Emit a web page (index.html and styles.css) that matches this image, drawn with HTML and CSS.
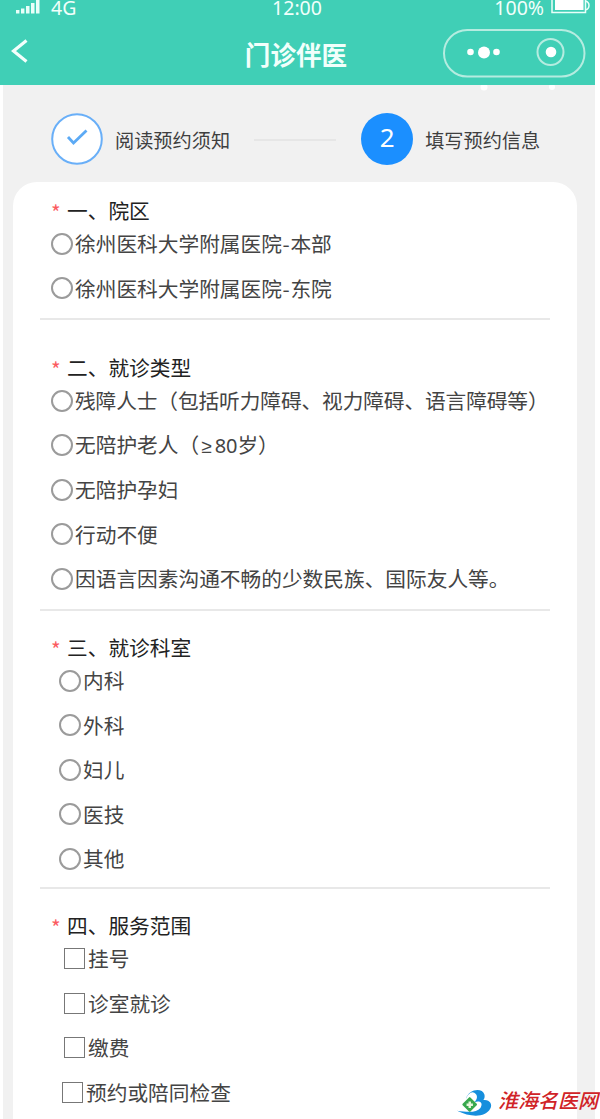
FILE: index.html
```html
<!DOCTYPE html>
<html lang="zh-CN">
<head>
<meta charset="utf-8">
<title>门诊伴医</title>
<link rel="stylesheet" href="styles.css">
</head>
<body>
<div class="app">
  <header class="header">
    <div class="status">
      <div class="status-left">
        <svg class="signal" width="25" height="14" viewBox="0 0 25 14" fill="#e9fff9"><rect x="0" y="10" width="3.4" height="3.5"/><rect x="5" y="8.500" width="3.400" height="5"/><rect x="10" y="6" width="3.500" height="7.500"/><rect x="15" y="3" width="3.500" height="10.500"/><rect x="20" y="0" width="3.500" height="13.500"/></svg>
        <span>4G</span>
      </div>
      <span class="clock">12:00</span>
      <div class="status-right">
        <span>100%</span>
        <svg class="battery" width="40" height="14" viewBox="0 0 40 14"><path d="M1 0V12.500H34.500V0M34.500 1Q38 2 38 5.500T34.500 10" fill="none" stroke="#e9fff9" stroke-width="1.500"/><rect x="4" y="0" width="28.500" height="10" fill="#fff"/></svg>
      </div>
    </div>
    <div class="nav">
      <svg class="back" width="18" height="26" viewBox="0 0 18 26"><path d="M15.500 2.500 2.500 13l13 10.500" fill="none" stroke="#f4fffc" stroke-width="3.200"/></svg>
      <h1 class="title">门诊伴医</h1>
      <svg class="capsule" width="144" height="50" viewBox="0 0 144 50"><rect x="2" y="2" width="140.500" height="46.500" rx="23.250" fill="none" stroke="#b5ece0" stroke-width="2"/><g fill="#fff"><circle cx="28.500" cy="24" r="3.300"/><circle cx="42" cy="24.500" r="6"/><circle cx="54.500" cy="24" r="3.300"/><circle cx="109" cy="24" r="5.300"/></g><circle cx="108.500" cy="24" r="13" fill="none" stroke="#b5ece0" stroke-width="2"/></svg>
    </div>
  </header>
  <main class="page">
    <div class="steps">
      <div class="step">
        <svg width="52" height="52" viewBox="0 0 52 52"><circle cx="26" cy="26" r="24.800" fill="#fff" stroke="#69aff8" stroke-width="2"/><path d="M17 24 22.500 30 35.500 17.500" fill="none" stroke="#5caaf5" stroke-width="2.800"/></svg>
        <span class="step-label">阅读预约须知</span>
      </div>
      <div class="step-line"></div>
      <div class="step">
        <span class="step-number">2</span>
        <span class="step-label">填写预约信息</span>
      </div>
      <svg class="specks" width="82" height="7" viewBox="0 0 82 7" fill="#fff"><circle cx="5" cy="2" r="3.500"/><circle cx="73" cy="2" r="3"/></svg>
    </div>
    <div class="card">
      <section class="group campus">
        <h2 class="legend"><i class="req">*</i>一、院区</h2>
        <label class="option"><span class="radio"></span><span>徐州医科大学附属医院<span class="dash">-</span>本部</span></label>
        <label class="option"><span class="radio"></span><span>徐州医科大学附属医院<span class="dash">-</span>东院</span></label>
      </section>
      <section class="group kind">
        <h2 class="legend"><i class="req">*</i>二、就诊类型</h2>
        <label class="option"><span class="radio"></span><span class="tight">残障人士（包括听力障碍、视力障碍、语言障碍等）</span></label>
        <label class="option"><span class="radio"></span><span>无陪护老人（<span class="latin"><span class="gte">≥</span>80</span><span class="tight">岁）</span></span></label>
        <label class="option"><span class="radio"></span>无陪护孕妇</label>
        <label class="option"><span class="radio"></span>行动不便</label>
        <label class="option"><span class="radio"></span>因语言因素沟通不畅的少数民族、国际友人等。</label>
      </section>
      <section class="group dept">
        <h2 class="legend"><i class="req">*</i>三、就诊科室</h2>
        <label class="option"><span class="radio"></span>内科</label>
        <label class="option"><span class="radio"></span>外科</label>
        <label class="option"><span class="radio"></span>妇儿</label>
        <label class="option"><span class="radio"></span>医技</label>
        <label class="option"><span class="radio"></span>其他</label>
      </section>
      <section class="group service">
        <h2 class="legend"><i class="req">*</i>四、服务范围</h2>
        <label class="option"><span class="box"></span>挂号</label>
        <label class="option"><span class="box"></span>诊室就诊</label>
        <label class="option"><span class="box"></span>缴费</label>
        <label class="option shifted"><span class="box"></span>预约或陪同检查</label>
      </section>
    </div>
  </main>
  <div class="watermark">
    <svg width="42" height="32" viewBox="0 0 42 32"><path d="M9 12C12 1 26 0 28 7c.600 2 .400 4-1 6 6-1 10 4 7 9-5 9-20 9-34 2 12 1.500 20 2 24-3 3-5 0-8-6-6 4-4 3-9-2-10-3 0-5 3-7 7Z" fill="#168fdd"/><path d="m13 11 6.500 6.500L13 24l-6.500-6.500Z" fill="#38a84d" stroke="#38a84d" stroke-width="2" stroke-linejoin="round"/><path d="M11.800 14.500h2.500v2h2v2.500h-2v2h-2.500v-2h-2v-2.500h2Z" fill="#e8f7dc"/></svg>
    <span class="brand">淮海名医网</span>
  </div>
</div>
</body>
</html>
```
FILE: styles.css
```css
* { box-sizing: border-box; }
body {
  margin: 0;
  background: #fff;
  color: #444;
  font-family: "Noto Sans", "Noto Sans CJK SC", sans-serif;
}
.app {
  position: relative;
  width: 600px;
  height: 1119px;
  overflow: hidden;
}
.header {
  width: 595px;
  height: 85px;
  background: #40cfb6;
  color: #f1fffb;
}
.status {
  display: grid;
  grid-template-columns: 1fr auto 1fr;
  height: 16px;
  padding-left: 16px;
  padding-right: 4px;
  font-size: 19.5px;
  line-height: 16px;
}
.status-left, .status-right { display: flex; }
.status-left { gap: 10px; }
.status-right { justify-content: flex-end; gap: 7px; }
.clock { padding-right: 13px; }
.nav {
  display: grid;
  grid-template-columns: 144px 1fr 144px;
  align-items: center;
  height: 69px;
  padding: 0 9px 0 11px;
}
.title {
  margin: 6px 0 0;
  padding-right: 5px;
  text-align: center;
  font-family: "Noto Sans CJK SC", sans-serif;
  font-size: 25.6px;
  font-weight: 700;
  line-height: 32px;
}
.capsule { margin-top: 5px; }
.page {
  width: 592px;
  height: 1034px;
  margin-left: 3px;
  padding: 0 18px 0 10px;
  background: #f1f1f1;
}
.steps {
  position: relative;
  display: flex;
  align-items: center;
  height: 97px;
  padding: 10px 0 0 38px;
}
.specks { position: absolute; left: 466px; top: 0; }
.step { display: flex; align-items: center; gap: 12px; }
.step-label {
  padding-top: 2px;
  font-family: "Noto Sans CJK SC", sans-serif;
  font-size: 19.2px;
  line-height: 28px;
  color: #3f3f3f;
}
.step-line { width: 82px; height: 2px; margin: 2px 25px 0 24px; background: #e6e6e6; }
.step-number {
  width: 52px;
  height: 52px;
  border-radius: 50%;
  background: #1b8fff;
  color: #fff;
  text-align: center;
  font-size: 26px;
  line-height: 49px;
}
.card {
  height: 937px;
  padding: 18px 27px 0;
  border-radius: 24px 24px 0 0;
  background: #fff;
}
.group { border-bottom: 2px solid #e8e8e8; padding-left: 11px; }
.campus { height: 120px; }
.kind { height: 291px; padding-top: 37px; }
.dept { height: 278px; padding-top: 26px; }
.service { padding-top: 26px; border: 0; }
.legend {
  display: flex;
  margin: 0;
  height: 21.5px;
  font-family: "Noto Sans CJK SC", sans-serif;
  font-size: 20.7px;
  font-weight: 400;
  line-height: 21.5px;
  color: #222;
}
.req {
  width: 16px;
  padding-top: 2px;
  color: #fb5b5f;
  font-style: normal;
}
.option {
  display: flex;
  align-items: center;
  gap: 2px;
  height: 44.5px;
  font-family: "Noto Sans CJK SC", sans-serif;
  font-size: 20.7px;
  line-height: 43px;
  white-space: nowrap;
}
.dash { display: inline-block; width: 8.5px; text-align: center; }
.latin { margin-left: 2px; font-family: "Noto Sans", sans-serif; font-size: 20px; }
.gte { display: inline-block; width: 13.5px; font-size: 19px; }
.tight { letter-spacing: -0.1px; }
.radio {
  flex: none;
  width: 22px;
  height: 22px;
  border: 2px solid #9b9b9b;
  border-radius: 50%;
}
.dept .option { padding-left: 8px; }
.box { flex: none; width: 21px; height: 21px; border: 1.5px solid #777; }
.service .option { gap: 3px; padding-left: 13px; }
.service .shifted { padding-left: 11px; }
.watermark {
  position: absolute;
  right: 0;
  bottom: 0;
  display: flex;
  align-items: center;
  gap: 2px;
  width: 143px;
  height: 33px;
}
.brand {
  font-family: "Noto Sans CJK SC", sans-serif;
  font-size: 20px;
  font-weight: 500;
  line-height: 30px;
  margin-top: -5px;
  color: #d02327;
  white-space: nowrap;
  transform: skewX(-14deg);
}
```
